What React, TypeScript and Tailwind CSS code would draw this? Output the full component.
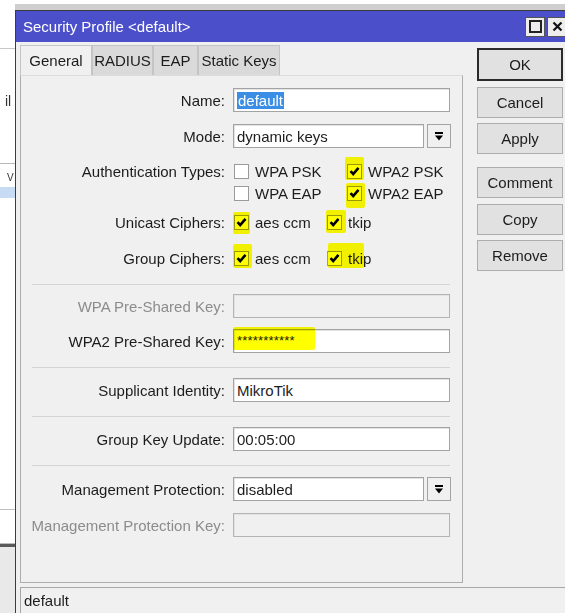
import type { ReactNode } from "react";

type Hl = { l: number; t: number; w: number; h: number };

// yellow marker stroke laid over a control
function Marker({ hl }: { hl: Hl }) {
  return (
    <span
      className="absolute bg-[#ffff00] mix-blend-multiply rounded-[2px] pointer-events-none"
      style={{ left: hl.l, top: hl.t, width: hl.w, height: hl.h }}
    />
  );
}

function Check({ on, label, hl }: { on?: boolean; label: string; hl?: Hl }) {
  return (
    <div className="flex items-center gap-[6px] ml-[1px]">
      <span className="relative flex w-[15px] h-[15px] items-center justify-center border border-[#9a9a9a] bg-white">
        {on && (
          <svg width="11" height="10" viewBox="0 0 11 10">
            <path d="M1.5 5.2 L4.2 8 L9.5 1.8" fill="none" stroke="#000" strokeWidth="2.6" />
          </svg>
        )}
        {hl && <Marker hl={hl} />}
      </span>
      <span className="text-[#1c1c1c]">{label}</span>
    </div>
  );
}

function Label({ text, muted }: { text: string; muted?: boolean }) {
  return (
    <div
      className={`w-[212px] h-[22px] shrink-0 flex items-center justify-end pr-[8px] whitespace-nowrap ${
        muted ? "text-[#8c8c8c]" : "text-[#1c1c1c]"
      }`}
    >
      {text}
    </div>
  );
}

function Input({ children, disabled, w = 217 }: { children?: ReactNode; disabled?: boolean; w?: number }) {
  return (
    <div
      className={`relative h-[24px] flex items-center px-[3px] border border-[#a3a3a3] shadow-[inset_1px_1px_0_#e3e3e3] ${
        disabled ? "bg-[#f0f0f0] border-[#b4b4b4]" : "bg-white"
      } text-[#1c1c1c]`}
      style={{ width: w }}
    >
      {children}
    </div>
  );
}

function DropBtn() {
  return (
    <div className="ml-[3px] w-[24px] h-[24px] flex items-center justify-center border border-[#a3a3a3] bg-[#f0f0f0]">
      <svg width="10" height="11" viewBox="0 0 10 11">
        <rect x="1" y="1" width="8" height="2" fill="#000" />
        <path d="M1 4.5 H9 L5 9.5 Z" fill="#000" />
      </svg>
    </div>
  );
}

function Field({ label, muted, className = "", children }: { label: string; muted?: boolean; className?: string; children: ReactNode }) {
  return (
    <div className={`flex items-center h-[24px] ${className}`}>
      <Label text={label} muted={muted} />
      {children}
    </div>
  );
}

function Sep({ className = "" }: { className?: string }) {
  return <div className={`ml-[11px] w-[418px] h-px bg-[#d4d4d4] ${className}`} />;
}

function Btn({ children, primary, className = "" }: { children: ReactNode; primary?: boolean; className?: string }) {
  return (
    <div
      className={`w-[86px] flex items-center justify-center bg-[#e1e1e1] text-[#1c1c1c] ${
        primary ? "h-[33px] border-2 border-[#2b2b2b]" : "h-[31px] border border-[#adadad]"
      } ${className}`}
    >
      {children}
    </div>
  );
}

function Tab({ children, active, w }: { children: ReactNode; active?: boolean; w: number }) {
  return (
    <div
      className={`h-[30px] flex items-center justify-center border-t border-l border-r border-[#c4c4c4] ${
        active ? "bg-[#f0f0f0]" : "bg-[#dadada]"
      } text-[#1c1c1c]`}
      style={{ width: w }}
    >
      {children}
    </div>
  );
}

// strip of the window lying underneath on the left
function BackWindow() {
  return (
    <div className="w-[15px] shrink-0 flex flex-col bg-white overflow-hidden text-[14px]">
      <div className="h-[48px]" />
      <div className="h-px bg-[#c8c8c8]" />
      <div className="h-[44px]" />
      <div className="h-[16px] pl-[5px] text-[#333] leading-[16px] whitespace-nowrap">il</div>
      <div className="h-[54px]" />
      <div className="h-px bg-[#b8b8b8]" />
      <div className="h-[8px]" />
      <div className="h-[12px] pl-[7px] text-[#333] text-[10px] leading-[12px] whitespace-nowrap">V</div>
      <div className="h-[3px]" />
      <div className="h-[11px] bg-[#c7dcf4]" />
      <div className="flex-1" />
      <div className="h-px bg-[#c0c0c0]" />
      <div className="h-[33px]" />
      <div className="h-px bg-[#bdbdbd]" />
      <div className="h-[3px] bg-[#5a5a5a]" />
      <div className="h-[66px] bg-[#e9e9e9]" />
    </div>
  );
}

export default function App() {
  return (
    <div className="w-[565px] h-[613px] flex bg-white overflow-hidden font-['Liberation_Sans',Arial,sans-serif] text-[15px] leading-none">
      <BackWindow />

      <div className="flex-1 flex flex-col pt-[4px] min-w-0">
        <div className="h-[6px] bg-[#cfcfcf]" />
        <div className="flex-1 flex flex-col border-l border-t border-[#3c3c3c]">
          {/* title bar */}
          <div className="h-[31px] bg-[#4b4fc9] flex items-center pl-[7px] text-white">
            <span className="flex-1">Security Profile &lt;default&gt;</span>
            <div className="flex gap-[2px] mr-[-2px]">
              <div className="w-[20px] h-[20px] bg-[#eeeeee] border border-[#555] flex items-center justify-center">
                <div className="w-[13px] h-[13px] border-2 border-[#222]" />
              </div>
              <div className="w-[20px] h-[20px] bg-[#eeeeee] border border-[#555] flex items-center justify-center">
                <svg width="11" height="11" viewBox="0 0 11 11">
                  <path d="M1.5 1.5 L9.5 9.5 M9.5 1.5 L1.5 9.5" stroke="#111" strokeWidth="2.2" />
                </svg>
              </div>
            </div>
          </div>

          <div className="flex-1 flex flex-col bg-[#f0f0f0]">
            <div className="flex">
              <div className="pl-[4px] pt-[3px] flex flex-col">
                <div className="flex">
                  <Tab active w={72}>General</Tab>
                  <Tab w={61}>RADIUS</Tab>
                  <Tab w={45}>EAP</Tab>
                  <Tab w={82}>Static Keys</Tab>
                </div>

                <div className="w-[443px] h-[508px] border border-[#adadad] border-t-[#dcdcdc] flex flex-col">
                  <Field label="Name:" className="mt-[12px]">
                    <Input>
                      <span className="bg-[#3a8ee6] text-white px-[1px] h-[17px] flex items-center">default</span>
                    </Input>
                  </Field>

                  <Field label="Mode:" className="mt-[12px]">
                    <Input w={191}>dynamic keys</Input>
                    <DropBtn />
                  </Field>

                  <div className="flex mt-[12px]">
                    <Label text="Authentication Types:" />
                    <div className="flex flex-col">
                      <div className="flex items-center h-[22px]">
                        <div className="w-[113px]">
                          <Check label="WPA PSK" />
                        </div>
                        <Check on label="WPA2 PSK" hl={{ l: -3, t: -8, w: 19, h: 23 }} />
                      </div>
                      <div className="flex items-center h-[22px]">
                        <div className="w-[113px]">
                          <Check label="WPA EAP" />
                        </div>
                        <Check on label="WPA2 EAP" hl={{ l: -2, t: -4, w: 19, h: 25 }} />
                      </div>
                    </div>
                  </div>

                  <div className="flex items-center h-[22px] mt-[7px]">
                    <Label text="Unicast Ciphers:" />
                    <div className="w-[93px]">
                      <Check on label="aes ccm" hl={{ l: -2, t: -4, w: 17, h: 22 }} />
                    </div>
                    <Check on label="tkip" hl={{ l: -2, t: -6, w: 20, h: 23 }} />
                  </div>

                  <div className="flex items-center h-[22px] mt-[14px]">
                    <Label text="Group Ciphers:" />
                    <div className="w-[93px]">
                      <Check on label="aes ccm" hl={{ l: -2, t: -8, w: 19, h: 24 }} />
                    </div>
                    <Check on label="tkip" hl={{ l: 0, t: -9, w: 36, h: 25 }} />
                  </div>

                  <Sep className="mt-[15px]" />

                  <Field label="WPA Pre-Shared Key:" muted className="mt-[9px]">
                    <Input disabled />
                  </Field>

                  <Field label="WPA2 Pre-Shared Key:" className="mt-[11px]">
                    <Input>
                      <Marker hl={{ l: -1, t: -3, w: 82, h: 23 }} />
                      <span className="text-[13px] tracking-[0.2px] mt-[-2px] text-[#222]">***********</span>
                    </Input>
                  </Field>

                  <Sep className="mt-[14px]" />

                  <Field label="Supplicant Identity:" className="mt-[10px]">
                    <Input>MikroTik</Input>
                  </Field>

                  <Sep className="mt-[14px]" />

                  <Field label="Group Key Update:" className="mt-[10px]">
                    <Input>00:05:00</Input>
                  </Field>

                  <Sep className="mt-[14px]" />

                  <Field label="Management Protection:" className="mt-[11px]">
                    <Input w={191}>disabled</Input>
                    <DropBtn />
                  </Field>

                  <Field label="Management Protection Key:" muted className="mt-[12px]">
                    <Input disabled />
                  </Field>
                </div>
              </div>

              <div className="ml-[14px] pt-[6px] flex flex-col">
                <Btn primary>OK</Btn>
                <Btn className="mt-[6px]">Cancel</Btn>
                <Btn className="mt-[5px]">Apply</Btn>
                <Btn className="mt-[13px]">Comment</Btn>
                <Btn className="mt-[6px]">Copy</Btn>
                <Btn className="mt-[5px]">Remove</Btn>
              </div>
            </div>

            <div className="mt-[4px] ml-[4px] flex-1 border-t border-l border-[#a8a8a8] flex items-center pl-[3px] text-[#1c1c1c]">
              default
            </div>
          </div>
        </div>
      </div>
    </div>
  );
}
